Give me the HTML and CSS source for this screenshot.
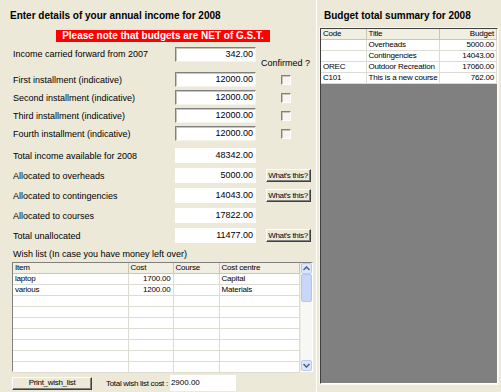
FILE: index.html
```html
<!DOCTYPE html>
<html lang="en">
<head>
    <meta charset="UTF-8">
    <title>Annual income 2008</title>
    <link rel="stylesheet" href="styles.css">
</head>
<body>
    <div class="app">
        <!-- Income panel -->
        <div class="income-panel">
            <h1>Enter details of your annual income for 2008</h1>
            <div class="banner">Please note that budgets are NET of G.S.T.</div>

            <div class="row row-first">
                <span class="label">Income carried forward from 2007</span>
                <span class="box edit">342.00</span>
                <span class="extra confirmed">Confirmed ?</span>
            </div>
            <div class="row">
                <span class="label">First installment (indicative)</span>
                <span class="box edit">12000.00</span>
                <span class="extra"><span class="check"></span></span>
            </div>
            <div class="row">
                <span class="label">Second installment (indicative)</span>
                <span class="box edit">12000.00</span>
                <span class="extra"><span class="check"></span></span>
            </div>
            <div class="row">
                <span class="label">Third installment (indicative)</span>
                <span class="box edit">12000.00</span>
                <span class="extra"><span class="check"></span></span>
            </div>
            <div class="row">
                <span class="label">Fourth installment (indicative)</span>
                <span class="box edit">12000.00</span>
                <span class="extra"><span class="check"></span></span>
            </div>

            <div class="row row-gap row-total">
                <span class="label">Total income available for 2008</span>
                <span class="box">48342.00</span>
            </div>
            <div class="row row-gap">
                <span class="label">Allocated to overheads</span>
                <span class="box">5000.00</span>
                <span class="extra"><button class="btn help">What's this?</button></span>
            </div>
            <div class="row row-gap">
                <span class="label">Allocated to contingencies</span>
                <span class="box">14043.00</span>
                <span class="extra"><button class="btn help">What's this?</button></span>
            </div>
            <div class="row row-gap">
                <span class="label">Allocated to courses</span>
                <span class="box">17822.00</span>
            </div>
            <div class="row row-gap">
                <span class="label">Total unallocated</span>
                <span class="box">11477.00</span>
                <span class="extra"><button class="btn help">What's this?</button></span>
            </div>

            <div class="wish-label">Wish list (In case you have money left over)</div>

            <div class="wish-grid">
                <table class="grid wish-table">
                    <thead>
                        <tr>
                            <th class="c-item">Item</th>
                            <th class="c-cost">Cost</th>
                            <th class="c-course">Course</th>
                            <th>Cost centre</th>
                        </tr>
                    </thead>
                    <tbody>
                        <tr><td>laptop</td><td class="num">1700.00</td><td></td><td>Capital</td></tr>
                        <tr><td>various</td><td class="num">1200.00</td><td></td><td>Materials</td></tr>
                        <tr><td></td><td></td><td></td><td></td></tr>
                        <tr><td></td><td></td><td></td><td></td></tr>
                        <tr><td></td><td></td><td></td><td></td></tr>
                        <tr><td></td><td></td><td></td><td></td></tr>
                        <tr><td></td><td></td><td></td><td></td></tr>
                        <tr><td></td><td></td><td></td><td></td></tr>
                        <tr><td></td><td></td><td></td><td></td></tr>
                    </tbody>
                </table>
                <div class="scrollbar">
                    <div class="sb-btn">
                        <svg width="7" height="5" viewBox="0 0 7 5"><path d="M0.5 4 L3.5 1 L6.5 4" fill="none" stroke="#4d6185" stroke-width="1.5"/></svg>
                    </div>
                    <div class="sb-thumb"></div>
                    <div class="sb-track"></div>
                    <div class="sb-btn">
                        <svg width="7" height="5" viewBox="0 0 7 5"><path d="M0.5 1 L3.5 4 L6.5 1" fill="none" stroke="#4d6185" stroke-width="1.5"/></svg>
                    </div>
                </div>
            </div>

            <div class="wish-footer">
                <button class="btn print">Print_wish_list</button>
                <span class="total-label">Total wish list cost :</span>
                <span class="total-box">2900.00</span>
            </div>
        </div>

        <!-- Summary panel -->
        <div class="summary-panel">
            <h2>Budget total summary for 2008</h2>
            <div class="summary-grid">
                <table class="grid summary-table">
                    <thead>
                        <tr>
                            <th class="c-code">Code</th>
                            <th class="c-title">Title</th>
                            <th class="num">Budget</th>
                        </tr>
                    </thead>
                    <tbody>
                        <tr><td></td><td>Overheads</td><td class="num">5000.00</td></tr>
                        <tr><td></td><td>Contingencies</td><td class="num">14043.00</td></tr>
                        <tr><td>OREC</td><td>Outdoor Recreation</td><td class="num">17060.00</td></tr>
                        <tr><td>C101</td><td>This is a new course</td><td class="num">762.00</td></tr>
                    </tbody>
                </table>
            </div>
        </div>
    </div>
</body>
</html>
```

FILE: styles.css
```css
:root {
    --xp-bg: #ece9d8;
    --shade: #808080;
    --dark: #404040;
    --line: #dcdcd4;
}

* {
    box-sizing: border-box;
    margin: 0;
    padding: 0;
}

body {
    font-family: "Liberation Sans", Arial, sans-serif;
    font-size: 9px;
    color: #000;
    background: var(--xp-bg);
    width: 501px;
    height: 392px;
    overflow: hidden;
}

.app {
    display: flex;
    height: 392px;
}

/* left panel */
.income-panel {
    width: 317px;
    border-right: 1px solid #fff;
    padding-left: 13px;
}

h1 {
    font-size: 10px;
    font-weight: bold;
    line-height: 12px;
    margin: 10px 0 0 -3px;
}

.banner {
    display: inline-block;
    margin: 8px 0 0 43px;
    width: 214px;
    height: 12px;
    line-height: 12px;
    background: #ff0000;
    color: #fff;
    font-size: 10px;
    font-weight: bold;
    text-align: center;
}

.row {
    display: flex;
    align-items: center;
    height: 15px;
    margin-top: 3px;
}

.row-first {
    align-items: flex-start;
    height: 22px;
    margin-top: 5px;
}

.row-first .label {
    line-height: 15px;
}

.row-gap {
    margin-top: 5px;
}

.row-total {
    margin-top: 7px;
}

.label {
    width: 162px;
    white-space: nowrap;
}

.box {
    width: 81px;
    height: 15px;
    line-height: 13px;
    background: #fff;
    border: 1px solid #fff;
    text-align: right;
    padding-right: 2px;
}

.box.edit {
    border-color: var(--shade) #f4f3ee #f4f3ee var(--shade);
    box-shadow: inset 1px 1px 0 #c8c5b8;
}

.extra {
    width: 52px;
    margin-left: 5px;
    display: flex;
    justify-content: center;
}

.confirmed {
    padding-top: 10px;
    line-height: 12px;
    white-space: nowrap;
    justify-content: flex-start;
}

.check {
    display: block;
    width: 10px;
    height: 10px;
    margin-left: -3px;
    background: #f6f5f0;
    border: 1px solid;
    border-color: var(--shade) #fff #fff var(--shade);
    box-shadow: inset 1px 1px 0 #c8c5b8;
}

.btn {
    font-family: "Liberation Sans", Arial, sans-serif;
    font-size: 8px;
    letter-spacing: -0.3px;
    white-space: nowrap;
    color: #000;
    background: var(--xp-bg);
    border: 1px solid;
    border-color: #fff var(--dark) var(--dark) #fff;
    box-shadow: inset -1px -1px 0 var(--shade);
    height: 13px;
    line-height: 10px;
    padding: 0;
}

.help {
    width: 45px;
    margin-left: 2px;
}

.wish-label {
    margin-top: 5px;
    line-height: 12px;
}

/* grids */
.grid {
    border-collapse: collapse;
    table-layout: fixed;
    font-size: 8px;
    letter-spacing: -0.2px;
}

.grid th,
.grid td {
    font-weight: normal;
    text-align: left;
    white-space: nowrap;
    overflow: hidden;
    padding: 0 2px;
    border-right: 1px solid var(--line);
    border-bottom: 1px solid var(--line);
}

.grid th {
    height: 10px;
    line-height: 9px;
    background: #f1efe2;
    border-right-color: #c9c6b5;
    border-bottom-color: #c9c6b5;
}

.grid td {
    height: 11px;
    line-height: 10px;
    background: #fff;
}

.grid .num {
    text-align: right;
}

.wish-grid {
    display: flex;
    width: 301px;
    height: 110px;
    margin: 2px 0 0 -1px;
    border: 1px solid;
    border-color: var(--shade) #fff #fff var(--shade);
    background: #fff;
}

.wish-table {
    width: 287px;
}

.wish-table .c-item { width: 115px; }
.wish-table .c-cost { width: 45px; }
.wish-table .c-course { width: 46px; }

.scrollbar {
    width: 12px;
    display: flex;
    flex-direction: column;
    background: #f7f7f3;
    border-left: 1px solid #eeede5;
}

.sb-btn {
    height: 11px;
    display: flex;
    align-items: center;
    justify-content: center;
    background: #dbe5fb;
    border: 1px solid #b8cbf3;
    border-radius: 2px;
}

.sb-thumb {
    height: 28px;
    background: #c8d6fa;
    border: 1px solid #b3c6f2;
    border-radius: 2px;
}

.sb-track {
    flex: 1;
}

.wish-footer {
    display: flex;
    align-items: center;
    margin-top: 3px;
}

.print {
    width: 80px;
    margin-left: -1px;
}

.total-label {
    margin-left: 14px;
    font-size: 8px;
    letter-spacing: -0.3px;
    white-space: nowrap;
}

.total-box {
    width: 66px;
    height: 16px;
    line-height: 16px;
    margin-left: 2px;
    padding-left: 1px;
    font-size: 8px;
    background: #fff;
}

/* right panel */
.summary-panel {
    flex: 1;
    padding-left: 3px;
}

h2 {
    font-size: 10px;
    font-weight: bold;
    line-height: 12px;
    margin: 10px 0 0 4px;
}

.summary-grid {
    width: 178px;
    height: 356px;
    margin-top: 6px;
    background: var(--shade);
    border: 1px solid;
    border-color: var(--dark) #fff #fff var(--dark);
    box-shadow: 0 0 0 1px #f6f5ee;
}

.summary-table {
    width: 176px;
}

.summary-table .c-code { width: 45px; }
.summary-table .c-title { width: 73px; }
```
